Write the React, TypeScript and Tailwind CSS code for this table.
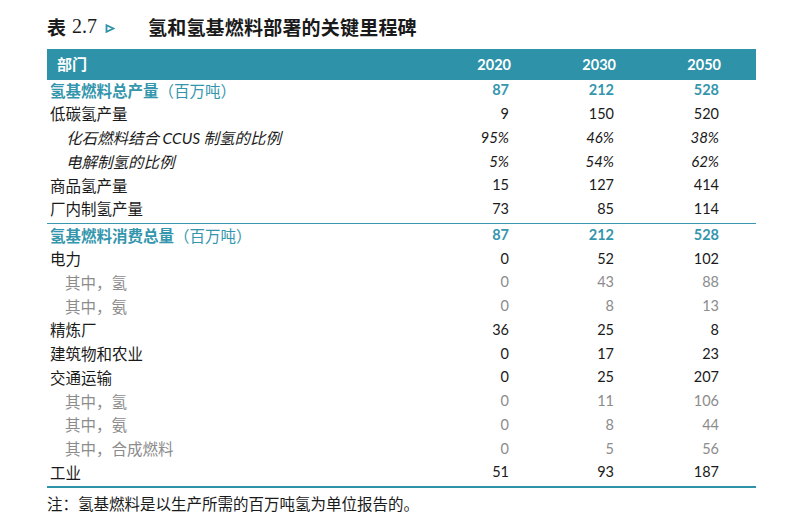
import React from 'react';

type Row = {
  label: React.ReactNode;
  values: string[];
  kind?: 'total' | 'normal' | 'italic' | 'sub';
  divider?: boolean;
};

const num = "font-['Lato','Liberation_Sans',sans-serif]";

const rows: Row[] = [
  { label: <>氢基燃料总产量<span className="font-normal">（百万吨）</span></>, values: ['87', '212', '528'], kind: 'total' },
  { label: '低碳氢产量', values: ['9', '150', '520'] },
  { label: <>化石燃料结合 <span className={num}>CCUS</span> 制氢的比例</>, values: ['95%', '46%', '38%'], kind: 'italic' },
  { label: '电解制氢的比例', values: ['5%', '54%', '62%'], kind: 'italic' },
  { label: '商品氢产量', values: ['15', '127', '414'] },
  { label: '厂内制氢产量', values: ['73', '85', '114'] },
  { label: <>氢基燃料消费总量<span className="font-normal">（百万吨）</span></>, values: ['87', '212', '528'], kind: 'total', divider: true },
  { label: '电力', values: ['0', '52', '102'] },
  { label: '其中，氢', values: ['0', '43', '88'], kind: 'sub' },
  { label: '其中，氨', values: ['0', '8', '13'], kind: 'sub' },
  { label: '精炼厂', values: ['36', '25', '8'] },
  { label: '建筑物和农业', values: ['0', '17', '23'] },
  { label: '交通运输', values: ['0', '25', '207'] },
  { label: '其中，氢', values: ['0', '11', '106'], kind: 'sub' },
  { label: '其中，氨', values: ['0', '8', '44'], kind: 'sub' },
  { label: '其中，合成燃料', values: ['0', '5', '56'], kind: 'sub' },
  { label: '工业', values: ['51', '93', '187'] },
];

const App: React.FC = () => {
  return (
    <div className="w-[795px] h-[515px] bg-white px-[47px] pt-[14px] font-['Noto_Sans_CJK_SC',sans-serif] text-[#1a1a1a] overflow-hidden">
      {/* title */}
      <div className="flex items-center h-[24px] text-[19px] font-bold leading-none">
        <span>表</span>
        <span className="ml-[6px] font-['Liberation_Serif','Noto_Sans_CJK_SC',serif] font-normal text-[20px]">2.7</span>
        <svg className="ml-[8px] mt-[4px]" width="10" height="9" viewBox="0 0 10 9">
          <path d="M1.5 1.2 L8.5 4.5 L1.5 7.8 Z" fill="none" stroke="#2e93a9" strokeWidth="1.8" />
        </svg>
        <span className="ml-[33px] tracking-[0.2px]">氢和氢基燃料部署的关键里程碑</span>
      </div>

      {/* table */}
      <div className="mt-[11px] w-[709px]">
        <div className="flex items-center h-[31px] bg-[#2e93a9] text-white font-bold pr-[35px]">
          <div className="flex-1 pl-[10px] text-[15px]">部门</div>
          {['2020', '2030', '2050'].map((y) => (
            <div key={y} className={`w-[105px] text-right text-[14.5px] ${num}`}>{y}</div>
          ))}
        </div>

        {rows.map((r, i) => {
          const labelCls =
            r.kind === 'total'
              ? 'pl-[3px] font-bold text-[#3496ad]'
              : r.kind === 'italic'
              ? 'pl-[19px] italic'
              : r.kind === 'sub'
              ? 'pl-[18px] text-[#8c8c8c]'
              : 'pl-[3px]';
          const valCls =
            r.kind === 'total'
              ? 'font-bold text-[#3496ad]'
              : r.kind === 'italic'
              ? 'italic text-[15px]'
              : r.kind === 'sub'
              ? 'text-[#8c8c8c]'
              : '';
          return (
            <div
              key={i}
              className={`flex items-center pr-[37px] ${r.divider ? 'border-t border-[#3a98ae] h-[26px] pt-[2px]' : 'h-[23.75px]'}`}
            >
              <div className={`flex-1 text-[15.5px] leading-none whitespace-nowrap -mt-[3px] ${labelCls}`}>{r.label}</div>
              {r.values.map((v, j) => (
                <div key={j} className={`w-[105px] text-right text-[14.5px] leading-none -mt-[3px] ${num} ${valCls}`}>
                  {v}
                </div>
              ))}
            </div>
          );
        })}
        <div className="h-[2px] bg-[#2e93a9]" />
      </div>

      <div className="mt-[8px] text-[15.5px] leading-none">注：氢基燃料是以生产所需的百万吨氢为单位报告的。</div>
    </div>
  );
};

export default App;
